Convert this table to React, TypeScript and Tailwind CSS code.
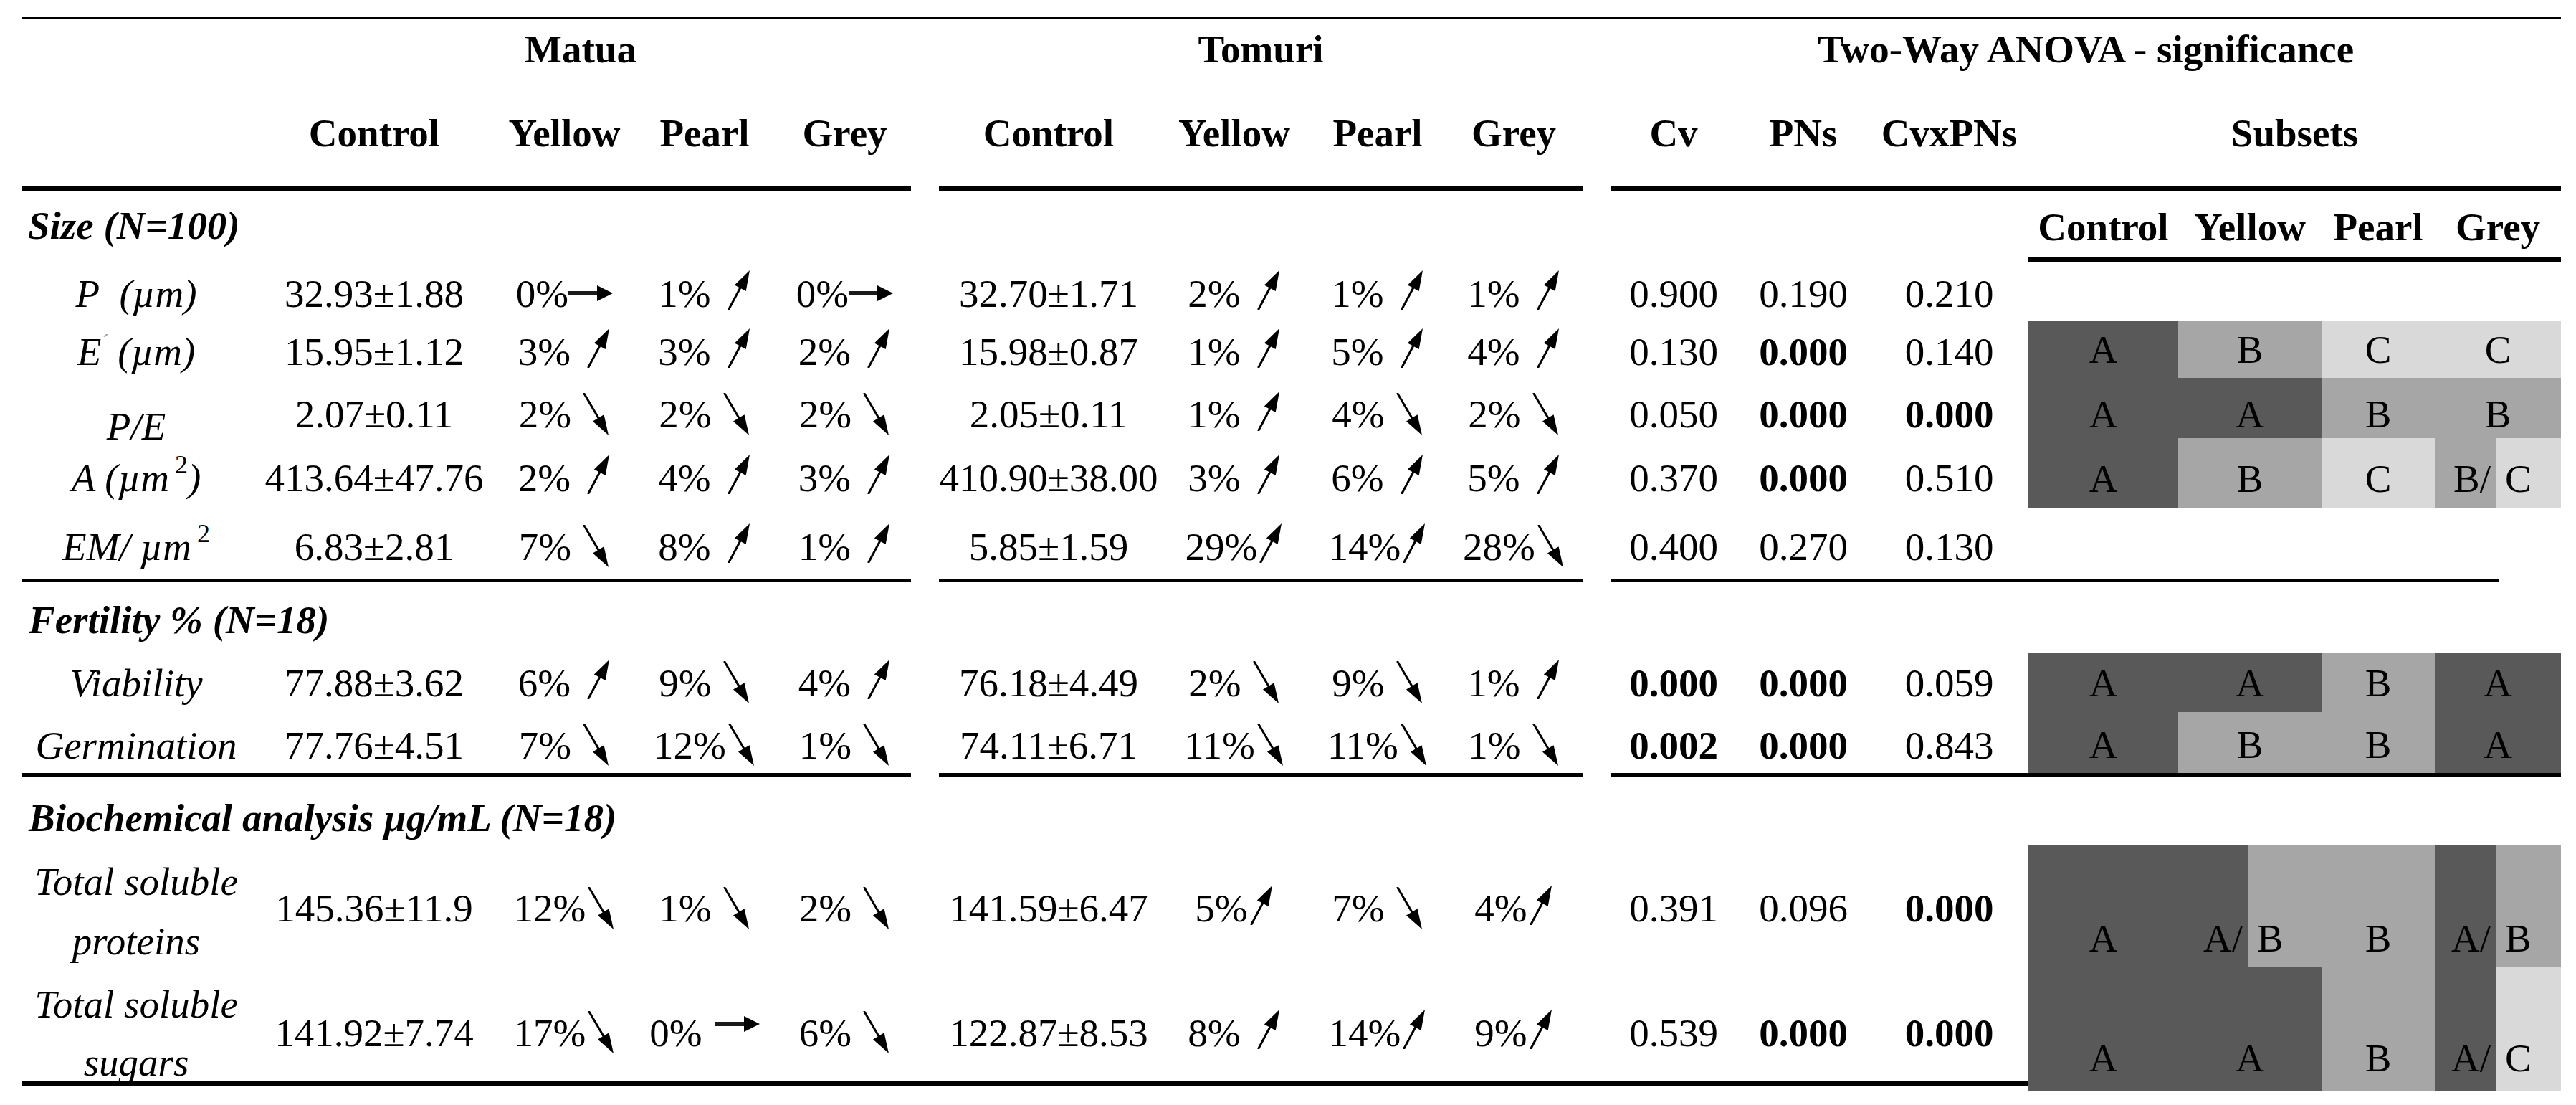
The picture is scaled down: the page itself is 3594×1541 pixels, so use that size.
import React from "react";

type ArrowDir = "u" | "d" | "r";
type Pct = { t: string; a: ArrowDir; tight?: boolean; raise?: boolean };
type Val = string | Pct;
type Shade = "D" | "M" | "L";
type Part = { bg: Shade; t: string };
type Sub = Part | { split: [Part, Part] };

const COLS =
  "grid grid-cols-[318px_346px_185px_206px_185px_39px_306px_212px_188px_192px_39px_176px_186px_221px_209px_200px_158px_176px]";
const BG: Record<Shade, string> = {
  D: "bg-[#595959]",
  M: "bg-[#a6a6a6]",
  L: "bg-[#d9d9d9]",
};

function ArrowIcon({ dir, tight, raise }: { dir: ArrowDir; tight?: boolean; raise?: boolean }) {
  if (dir === "u")
    return (
      <svg
        width="34"
        height="56"
        viewBox="0 0 34 56"
        className={`shrink-0 -translate-y-[5px] ${tight ? "ml-[2px]" : "ml-[22px]"}`}
      >
        <line x1="3" y1="55" x2="19" y2="25" stroke="#000" strokeWidth="3" strokeLinecap="round" />
        <polygon points="32,1 26.7,30 10.9,21.4" fill="#000" />
      </svg>
    );
  if (dir === "d")
    return (
      <svg
        width="38"
        height="60"
        viewBox="0 0 38 60"
        className={`shrink-0 ${tight ? "ml-[3px]" : "ml-[16px]"}`}
      >
        <line x1="2" y1="1" x2="22" y2="35" stroke="#000" strokeWidth="3" strokeLinecap="round" />
        <polygon points="36,59 14,39.4 29.6,30.2" fill="#000" />
      </svg>
    );
  return (
    <svg
      width="62"
      height="22"
      viewBox="0 0 62 22"
      className={`shrink-0 ${raise ? "ml-[18px] -translate-y-[12px]" : "ml-0"}`}
    >
      <line x1="0" y1="11" x2="42" y2="11" stroke="#1a1a1a" strokeWidth="6" />
      <polygon points="40,0 62,11 40,22" fill="#000" />
    </svg>
  );
}

function ValCell({ v, pad }: { v: Val; pad: string }) {
  if (typeof v === "string") {
    const bold = v.startsWith("*");
    return (
      <div className={`flex items-center justify-center whitespace-nowrap ${pad} ${bold ? "font-bold" : ""}`}>
        {bold ? v.slice(1) : v}
      </div>
    );
  }
  return (
    <div className={`flex items-center justify-center whitespace-nowrap ${pad}`}>
      <span className="flex items-center">
        <span>{v.t}</span>
        <ArrowIcon dir={v.a} tight={v.tight} raise={v.raise} />
      </span>
    </div>
  );
}

function SubCell({ s, pad }: { s: Sub; pad: string }) {
  if ("split" in s) {
    const [l, r] = s.split;
    return (
      <div className="flex">
        <div className={`flex-1 flex items-center justify-end pr-[8px] whitespace-nowrap ${BG[l.bg]} ${pad}`}>{l.t}</div>
        <div className={`flex-1 flex items-center justify-start pl-[12px] whitespace-nowrap ${BG[r.bg]} ${pad}`}>{r.t}</div>
      </div>
    );
  }
  return <div className={`flex items-center justify-center ${BG[s.bg]} ${pad}`}>{s.t}</div>;
}

function DataRow({
  h,
  pad,
  label,
  labelPad,
  vals,
  subs,
  subPad,
}: {
  h: string;
  pad: string;
  label: React.ReactNode;
  labelPad?: string;
  vals: Val[];
  subs?: Sub[];
  subPad?: string;
}) {
  return (
    <div className={`${COLS} ${h}`}>
      <div className={`flex items-center justify-center italic whitespace-nowrap ${labelPad ?? pad}`}>{label}</div>
      {vals.slice(0, 4).map((v, i) => (
        <ValCell key={"a" + i} v={v} pad={pad} />
      ))}
      <div />
      {vals.slice(4, 8).map((v, i) => (
        <ValCell key={"b" + i} v={v} pad={pad} />
      ))}
      <div />
      {vals.slice(8, 11).map((v, i) => (
        <ValCell key={"c" + i} v={v} pad={pad} />
      ))}
      {subs ? (
        subs.map((s, i) => <SubCell key={"s" + i} s={s} pad={subPad ?? pad} />)
      ) : (
        <div className="col-span-4" />
      )}
    </div>
  );
}

const u = (t: string, tight?: boolean): Pct => ({ t, a: "u", tight });
const d = (t: string, tight?: boolean): Pct => ({ t, a: "d", tight });
const r = (t: string, raise?: boolean): Pct => ({ t, a: "r", raise });
const c = (bg: Shade, t: string): Part => ({ bg, t });
const sp = (l: Part, rr: Part): Sub => ({ split: [l, rr] });

function SegLine({ h, third }: { h: string; third: "full" | "short" }) {
  return (
    <div className={`${COLS} ${h}`}>
      <div className="col-span-5 bg-black" />
      <div className="col-start-7 col-span-4 bg-black" />
      <div className="col-start-12 col-span-7">
        {third === "full" ? (
          <div className="h-full w-full bg-black" />
        ) : (
          <div className="h-full w-[1240px] bg-black" />
        )}
      </div>
    </div>
  );
}

function Sup({ children }: { children: React.ReactNode }) {
  return <sup className="text-[36px] not-italic ml-[8px]">{children}</sup>;
}

export default function App() {
  return (
    <div className="w-[3594px] h-[1541px] overflow-hidden bg-white text-black font-['Liberation_Serif',serif] text-[55px] leading-none pl-[31px]">
      <div className="h-[24px]" />
      <div className="h-[3px] w-[3542px] bg-black" />

      {/* Title row */}
      <div className={`${COLS} h-[83px] font-bold`}>
        <div className="col-start-2 col-span-4 flex items-center justify-center">Matua</div>
        <div className="col-start-7 col-span-4 flex items-center justify-center">Tomuri</div>
        <div className="col-start-12 col-span-7 flex items-center justify-center whitespace-nowrap">
          Two-Way ANOVA - significance
        </div>
      </div>

      {/* Sub header row */}
      <div className={`${COLS} h-[150px] font-bold`}>
        <div />
        <div className="flex items-center justify-center">Control</div>
        <div className="flex items-center justify-center">Yellow</div>
        <div className="flex items-center justify-center">Pearl</div>
        <div className="flex items-center justify-center">Grey</div>
        <div />
        <div className="flex items-center justify-center">Control</div>
        <div className="flex items-center justify-center">Yellow</div>
        <div className="flex items-center justify-center">Pearl</div>
        <div className="flex items-center justify-center">Grey</div>
        <div />
        <div className="flex items-center justify-center">Cv</div>
        <div className="flex items-center justify-center">PNs</div>
        <div className="flex items-center justify-center">CvxPNs</div>
        <div className="col-span-4 flex items-center justify-center">Subsets</div>
      </div>

      <SegLine h="h-[6px]" third="full" />

      {/* Size section header */}
      <div className={`${COLS} h-[93px] font-bold`}>
        <div className="col-span-14 flex items-center justify-start pl-[8px] pt-[4px] italic whitespace-nowrap">
          Size (N=100)
        </div>
        <div className="flex items-center justify-center pt-[8px]">Control</div>
        <div className="flex items-center justify-center pt-[8px]">Yellow</div>
        <div className="flex items-center justify-center pt-[8px]">Pearl</div>
        <div className="flex items-center justify-center pt-[8px]">Grey</div>
      </div>
      <div className={`${COLS} h-[6px]`}>
        <div className="col-start-15 col-span-4 bg-black" />
      </div>

      <DataRow
        h="h-[83px]"
        pad="pt-[5px]"
        label={<>P&nbsp;&nbsp;(µm)</>}
        vals={["32.93±1.88", r("0%"), u("1%"), r("0%"), "32.70±1.71", u("2%"), u("1%"), u("1%"), "0.900", "0.190", "0.210"]}
      />
      <DataRow
        h="h-[79px]"
        pad="pt-[5px]"
        subPad="pt-0"
        label={
          <>
            E<span className="text-[28px] text-gray-400 -translate-y-[14px]">´</span>&nbsp;(µm)
          </>
        }
        vals={["15.95±1.12", u("3%"), u("3%"), u("2%"), "15.98±0.87", u("1%"), u("5%"), u("4%"), "0.130", "*0.000", "0.140"]}
        subs={[c("D", "A"), c("M", "B"), c("L", "C"), c("L", "C")]}
      />
      <DataRow
        h="h-[84px]"
        pad="pt-[6px]"
        labelPad="pt-[40px]"
        label={<>P/E</>}
        vals={["2.07±0.11", d("2%"), d("2%"), d("2%"), "2.05±0.11", u("1%"), d("4%"), d("2%"), "0.050", "*0.000", "*0.000"]}
        subs={[c("D", "A"), c("D", "A"), c("M", "B"), c("M", "B")]}
      />
      <DataRow
        h="h-[98px]"
        pad="pt-[12px]"
        subPad="pt-[14px]"
        label={
          <>
            A (µm<Sup>2</Sup>)
          </>
        }
        vals={["413.64±47.76", u("2%"), u("4%"), u("3%"), "410.90±38.00", u("3%"), u("6%"), u("5%"), "0.370", "*0.000", "0.510"]}
        subs={[c("D", "A"), c("M", "B"), c("L", "C"), sp(c("M", "B/"), c("L", "C"))]}
      />
      <DataRow
        h="h-[99px]"
        pad="pt-[7px]"
        label={
          <>
            EM/ µm<Sup>2</Sup>
          </>
        }
        vals={["6.83±2.81", d("7%"), u("8%"), u("1%"), "5.85±1.59", u("29%", true), u("14%", true), d("28%", true), "0.400", "0.270", "0.130"]}
      />

      <SegLine h="h-[4px]" third="short" />

      {/* Fertility section header */}
      <div className={`${COLS} h-[99px] font-bold`}>
        <div className="col-span-14 flex items-center justify-start pl-[9px] pt-[6px] italic whitespace-nowrap">
          Fertility % (N=18)
        </div>
      </div>

      <DataRow
        h="h-[82px]"
        pad="pt-0"
        label={<>Viability</>}
        vals={["77.88±3.62", u("6%"), d("9%"), u("4%"), "76.18±4.49", d("2%"), d("9%"), u("1%"), "*0.000", "*0.000", "0.059"]}
        subs={[c("D", "A"), c("D", "A"), c("M", "B"), c("D", "A")]}
      />
      <DataRow
        h="h-[85px]"
        pad="pt-[7px]"
        subPad="pt-[5px]"
        label={<>Germination</>}
        vals={["77.76±4.51", d("7%"), d("12%", true), d("1%"), "74.11±6.71", d("11%", true), d("11%", true), d("1%"), "*0.002", "*0.000", "0.843"]}
        subs={[c("D", "A"), c("M", "B"), c("M", "B"), c("D", "A")]}
      />

      <SegLine h="h-[6px]" third="full" />

      {/* Biochemical section header */}
      <div className={`${COLS} h-[95px] font-bold`}>
        <div className="col-span-14 flex items-center justify-start pl-[9px] pt-[18px] italic whitespace-nowrap">
          Biochemical analysis µg/mL (N=18)
        </div>
      </div>

      <DataRow
        h="h-[169px]"
        pad="pt-0"
        labelPad="pt-[9px]"
        subPad="pt-[83px]"
        label={
          <div className="leading-[83px] text-center">
            Total soluble
            <br />
            proteins
          </div>
        }
        vals={["145.36±11.9", d("12%", true), d("1%"), d("2%"), "141.59±6.47", u("5%", true), d("7%"), u("4%", true), "0.391", "0.096", "*0.000"]}
        subs={[c("D", "A"), sp(c("D", "A/"), c("M", "B")), c("M", "B"), sp(c("D", "A/"), c("M", "B"))]}
      />
      <DataRow
        h="h-[160px]"
        pad="pt-[10px]"
        labelPad="pt-[12px]"
        subPad="pt-[80px]"
        label={
          <div className="leading-[81px] text-center">
            Total soluble
            <br />
            sugars
          </div>
        }
        vals={["141.92±7.74", d("17%", true), r("0%", true), d("6%"), "122.87±8.53", u("8%"), u("14%", true), u("9%", true), "0.539", "*0.000", "*0.000"]}
        subs={[c("D", "A"), c("D", "A"), c("M", "B"), sp(c("D", "A/"), c("L", "C"))]}
      />

      <div className="h-[6px] w-[3542px] bg-black" />
    </div>
  );
}
